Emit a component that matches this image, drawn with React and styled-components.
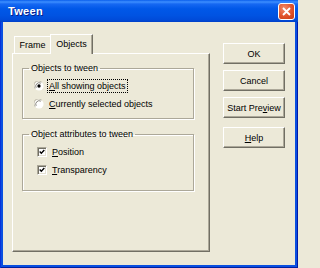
import React from "react";
import styled, { createGlobalStyle } from "styled-components";

const Global = createGlobalStyle`
  html, body { margin: 0; padding: 0; background: #ECE9D8; }
  body { font-family: "Liberation Sans", Arial, sans-serif; }
`;

const Window = styled.div`
  width: 298px;
  height: 268px;
  display: flex;
  flex-direction: column;
  background: #0A4FE0;
  box-shadow: inset 1px 0 0 #0831D9, inset -1px 0 0 #0019A8, inset 0 -1px 0 #001EA0;
  font-family: "Liberation Sans", Arial, sans-serif;
  font-size: 9px;
  color: #000;
  overflow: hidden;
`;

const TitleBar = styled.div`
  height: 22px;
  flex: none;
  display: flex;
  align-items: center;
  justify-content: space-between;
  padding: 0 3px 0 8px;
  background: linear-gradient(
    #0A5EEC 0%,
    #3D8FFF 9%,
    #1668F2 18%,
    #0058E8 40%,
    #0053E2 70%,
    #004BD9 90%,
    #0040C8 100%
  );
`;

const Title = styled.span`
  color: #fff;
  font-weight: bold;
  font-size: 11px;
  letter-spacing: 0.3px;
  text-shadow: 1px 1px 0 #0A1E8A;
`;

const CloseButton = styled.div`
  width: 15px;
  height: 15px;
  margin-top: 1px;
  border: 1px solid #fff;
  border-radius: 3px;
  background: radial-gradient(circle at 35% 30%, #F08A6A 0%, #E0522A 55%, #C43A10 100%);
  display: flex;
  align-items: center;
  justify-content: center;
`;

const Body = styled.div`
  flex: 1;
  margin: 0 3px 3px;
  background: #ECE9D8;
  display: flex;
  padding: 12px 0 0 9px;
`;

const LeftCol = styled.div`
  width: 198px;
  display: flex;
  flex-direction: column;
`;

const TabStrip = styled.div`
  height: 19px;
  display: flex;
  align-items: flex-end;
  padding-left: 2px;
`;

const Tab = styled.div`
  position: relative;
  box-sizing: border-box;
  width: ${(p) => p.$w}px;
  height: ${(p) => (p.$active ? 20 : 17)}px;
  margin-bottom: ${(p) => (p.$active ? -1 : 0)}px;
  z-index: ${(p) => (p.$active ? 1 : 0)};
  background: #ECE9D8;
  border-top: 1px solid #fff;
  border-left: 1px solid #fff;
  border-right: ${(p) => (p.$active ? "1px solid #716F64" : "none")};
  box-shadow: ${(p) => (p.$active ? "inset -1px 0 0 #ACA899" : "none")};
  display: flex;
  align-items: ${(p) => (p.$active ? "flex-start" : "center")};
  padding-top: ${(p) => (p.$active ? 3 : 0)}px;
  justify-content: center;
  line-height: 12px;
`;

const Panel = styled.div`
  box-sizing: border-box;
  height: 199px;
  border-top: 1px solid #fff;
  border-left: 1px solid #fff;
  border-right: 1px solid #716F64;
  border-bottom: 1px solid #716F64;
  box-shadow: inset -1px -1px 0 #ACA899;
  padding: 8px 0 0 9px;
  display: flex;
  flex-direction: column;
`;

const GroupBox = styled.fieldset`
  box-sizing: border-box;
  width: 172px;
  margin: ${(p) => p.$mt || 0}px 0 0 0;
  padding: 0 0 ${(p) => p.$pb}px 0;
  min-width: 0;
  border: 1px solid #ACA899;
  box-shadow: 1px 1px 0 #fff, inset 1px 1px 0 #fff;
  display: flex;
  flex-direction: column;
  gap: 4px;
`;

const Legend = styled.legend`
  margin-left: 6px;
  padding: 0 2px;
  line-height: 12px;
  font-size: 9px;
`;

const OptionRow = styled.div`
  height: 14px;
  display: flex;
  align-items: center;
  gap: 5px;
  padding-left: ${(p) => p.$pl}px;
  margin-top: ${(p) => p.$mt || 0}px;
`;

const Label = styled.span`
  line-height: 12px;
  padding: 0 1px;
  margin-left: -1px;
  outline: ${(p) => (p.$focus ? "1px dotted #000" : "none")};
  outline-offset: 0;
`;

const CheckBox = styled.span`
  box-sizing: border-box;
  width: 10px;
  height: 10px;
  flex: none;
  background: #fff;
  border-top: 1px solid #ACA899;
  border-left: 1px solid #ACA899;
  border-right: 1px solid #fff;
  border-bottom: 1px solid #fff;
  box-shadow: inset 1px 1px 0 #716F64, inset -1px -1px 0 #E3E0D2;
  display: flex;
  align-items: center;
  justify-content: center;
`;

const RightCol = styled.div`
  margin-left: 13px;
  padding-top: 9px;
  display: flex;
  flex-direction: column;
  gap: 6px;
`;

const Button = styled.div`
  box-sizing: border-box;
  width: 62px;
  height: 21px;
  margin-top: ${(p) => p.$mt || 0}px;
  background: #ECE9D8;
  border-top: 1px solid #fff;
  border-left: 1px solid #fff;
  border-right: 1px solid #716F64;
  border-bottom: 1px solid #716F64;
  box-shadow: inset -1px -1px 0 #ACA899;
  display: flex;
  align-items: center;
  justify-content: center;
  font-size: 9px;
  white-space: nowrap;
`;

const Radio = ({ checked }) => (
  <svg width="10" height="10" viewBox="0 0 12 12" style={{ flex: "none" }}>
    <circle cx="6" cy="6" r="5.5" fill="#fff" />
    <path d="M1.4 9.2 A5.5 5.5 0 0 1 9.2 1.4" stroke="#ACA899" strokeWidth="1" fill="none" />
    <path d="M2.6 8.3 A4.2 4.2 0 0 1 8.3 2.6" stroke="#716F64" strokeWidth="1" fill="none" />
    {checked && <circle cx="6" cy="6" r="2" fill="#000" />}
  </svg>
);

const Check = () => (
  <svg width="6" height="6" viewBox="0 0 7 7">
    <path d="M0.8 3 L2.7 5 L6.2 1.2" stroke="#000" strokeWidth="1.6" fill="none" />
  </svg>
);

export default function App() {
  return (
    <>
      <Global />
      <Window>
        <TitleBar>
          <Title>Tween</Title>
          <CloseButton>
            <svg width="9" height="9" viewBox="0 0 9 9">
              <path d="M1 1 L8 8 M8 1 L1 8" stroke="#fff" strokeWidth="1.8" />
            </svg>
          </CloseButton>
        </TitleBar>
        <Body>
          <LeftCol>
            <TabStrip>
              <Tab $w={36}>Frame</Tab>
              <Tab $w={43} $active>Objects</Tab>
            </TabStrip>
            <Panel>
              <GroupBox $pb={7}>
                <Legend>Objects to tween</Legend>
                <OptionRow $pl={11} $mt={5}>
                  <Radio checked />
                  <Label $focus>
                    <u>A</u>ll showing objects
                  </Label>
                </OptionRow>
                <OptionRow $pl={11}>
                  <Radio />
                  <Label>
                    <u>C</u>urrently selected objects
                  </Label>
                </OptionRow>
              </GroupBox>
              <GroupBox $mt={9} $pb={13}>
                <Legend>Object attributes to tween</Legend>
                <OptionRow $pl={14} $mt={5}>
                  <CheckBox>
                    <Check />
                  </CheckBox>
                  <Label>
                    <u>P</u>osition
                  </Label>
                </OptionRow>
                <OptionRow $pl={14}>
                  <CheckBox>
                    <Check />
                  </CheckBox>
                  <Label>
                    <u>T</u>ransparency
                  </Label>
                </OptionRow>
              </GroupBox>
            </Panel>
          </LeftCol>
          <RightCol>
            <Button>OK</Button>
            <Button>Cancel</Button>
            <Button>
              Start Pre<u>v</u>iew
            </Button>
            <Button $mt={3}>
              <u>H</u>elp
            </Button>
          </RightCol>
        </Body>
      </Window>
    </>
  );
}
